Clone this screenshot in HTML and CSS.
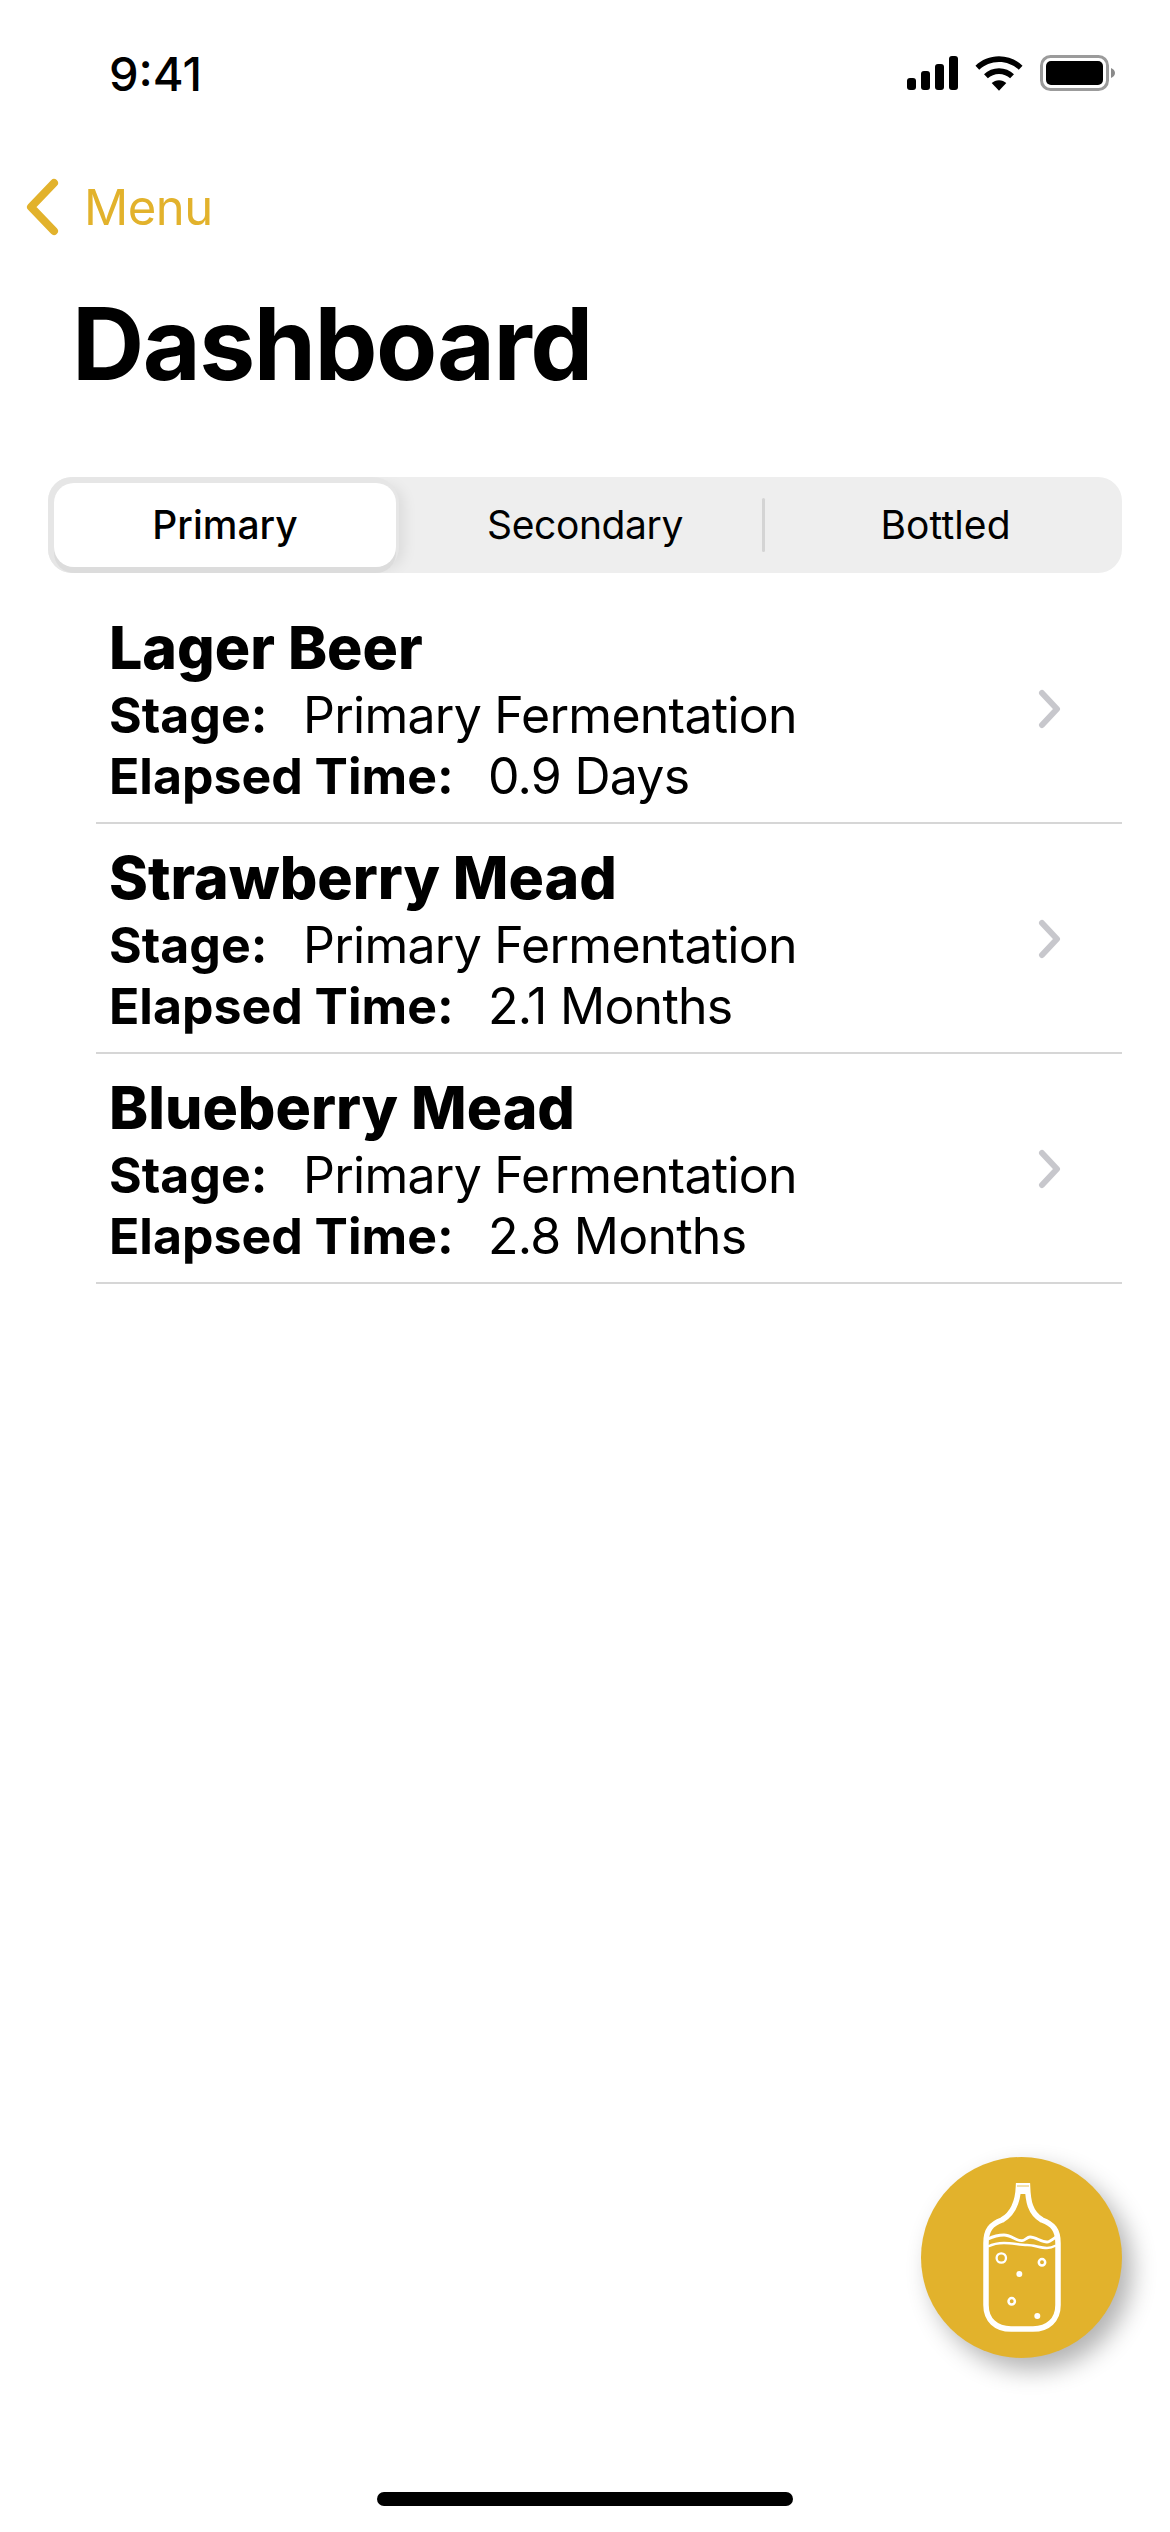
FILE: index.html
```html
<!DOCTYPE html>
<html lang="en">
<head>
    <meta charset="UTF-8">
    <meta name="viewport" content="width=device-width, initial-scale=1.0">
    <title>Dashboard</title>
    <link rel="stylesheet" href="styles.css">
</head>
<body>
    <div class="screen">
        <div class="status-bar">
            <div class="status-time">9:41</div>
            <div class="status-icons">
                <svg class="icon-signal" viewBox="0 0 51 34"><rect x="0" y="22" width="9" height="12" rx="3"/><rect x="14" y="15" width="9" height="19" rx="3"/><rect x="28" y="8" width="9" height="26" rx="3"/><rect x="42" y="0" width="9" height="34" rx="3"/></svg>
                <svg class="icon-wifi" viewBox="0 0 50 36"><path d="M25 0C34.500 0 43 3.700 49.500 9.800L45.600 14C40.200 9 33 5.900 25 5.900S9.800 9 4.400 14L.5 9.800C7 3.700 15.500 0 25 0Z"/><path d="M25 12.500C31 12.500 36.500 14.800 40.600 18.700L36.600 23C33.500 20.100 29.500 18.400 25 18.400S16.500 20.100 13.400 23L9.400 18.700C13.500 14.800 19 12.500 25 12.500Z"/><path d="M25 25C28 25 30.600 26.100 32.600 28L25 36L17.400 28C19.400 26.100 22 25 25 25Z"/></svg>
                <svg class="icon-battery" viewBox="0 0 75 36"><rect x="1.500" y="1.500" width="66" height="33" rx="9" fill="none" stroke="#9b9b9b" stroke-width="3"/><rect x="6" y="6" width="57" height="24" rx="5"/><path d="M71 13c2.500 1 4 2.800 4 5s-1.500 4-4 5z" fill="#8a8a8a"/></svg>
            </div>
        </div>

        <div class="nav-back">
            <svg class="icon-back" viewBox="0 0 33 58"><path d="M28 5L5 29l23 24" fill="none" stroke="#e2b22c" stroke-width="8" stroke-linecap="round" stroke-linejoin="round"/></svg>
            <span>Menu</span>
        </div>

        <h1 class="page-title">Dashboard</h1>

        <div class="segmented">
            <div class="segment"><div class="segment-active">Primary</div></div>
            <div class="segment segment-split">Secondary</div>
            <div class="segment segment-last">Bottled</div>
        </div>

        <div class="batch-list">
            <div class="batch-row">
                <div class="batch-info">
                    <div class="batch-name">Lager Beer</div>
                    <div class="batch-line"><b class="stage-label">Stage:</b><span class="batch-value">Primary Fermentation</span></div>
                    <div class="batch-line"><b class="time-label">Elapsed Time:</b><span class="batch-value">0.9 Days</span></div>
                </div>
                <svg class="icon-chevron" viewBox="0 0 24 40"><path d="M4 4l15 16L4 36" fill="none" stroke="#c7c7cc" stroke-width="6" stroke-linecap="round" stroke-linejoin="round"/></svg>
            </div>
            <div class="batch-row">
                <div class="batch-info">
                    <div class="batch-name">Strawberry Mead</div>
                    <div class="batch-line"><b class="stage-label">Stage:</b><span class="batch-value">Primary Fermentation</span></div>
                    <div class="batch-line"><b class="time-label">Elapsed Time:</b><span class="batch-value">2.1 Months</span></div>
                </div>
                <svg class="icon-chevron" viewBox="0 0 24 40"><path d="M4 4l15 16L4 36" fill="none" stroke="#c7c7cc" stroke-width="6" stroke-linecap="round" stroke-linejoin="round"/></svg>
            </div>
            <div class="batch-row">
                <div class="batch-info">
                    <div class="batch-name">Blueberry Mead</div>
                    <div class="batch-line"><b class="stage-label">Stage:</b><span class="batch-value">Primary Fermentation</span></div>
                    <div class="batch-line"><b class="time-label">Elapsed Time:</b><span class="batch-value">2.8 Months</span></div>
                </div>
                <svg class="icon-chevron" viewBox="0 0 24 40"><path d="M4 4l15 16L4 36" fill="none" stroke="#c7c7cc" stroke-width="6" stroke-linecap="round" stroke-linejoin="round"/></svg>
            </div>
        </div>

        <div class="home-indicator"></div>

        <div class="fab">
            <svg class="icon-carboy" viewBox="0 0 78 149" fill="none" stroke="#fff">
                <path d="M35.500 3H44.500C45 18 47 30 59 37C70 41 75 47 75 60V122C75 137 65 146 50 146H28C13 146 3 137 3 122V60C3 47 8 41 19 37C31 30 35 18 35.500 3Z" stroke-width="5.500"/>
                <rect x="33" y="0" width="14" height="11" fill="#fff" stroke="none"/>
                <path d="M34 3H46" stroke="#e2b22c" stroke-width="0.800"/>
                <path d="M5 56C11 53 16 52 21 52C28 52 33 58 39 57.700C42 57.500 44 54 47 54C53 54 58 59 64 59C67 59 70 56 73 54" stroke-width="2.800"/>
                <path d="M5 63.500C10 61 15 60 21 60C29 60 37 62 44 62C51 62 57 65 64 65C67 65 70 64 73 62.500" stroke-width="2.400"/>
                <circle cx="18.300" cy="75" r="4.700" stroke-width="2.300"/>
                <circle cx="59" cy="79.300" r="3.200" stroke-width="2.500"/>
                <circle cx="36.300" cy="91" r="3" fill="#fff" stroke="none"/>
                <circle cx="28.700" cy="118.300" r="3.200" stroke-width="2.500"/>
                <circle cx="54.300" cy="133" r="3" fill="#fff" stroke="none"/>
            </svg>
        </div>
    </div>
</body>
</html>
```

FILE: styles.css
```css
* {
    box-sizing: border-box;
}

body {
    margin: 0;
    background: #fff;
    color: #000;
    font-family: Inter, 'Liberation Sans', sans-serif;
}

.screen {
    position: relative;
    width: 1170px;
    height: 2532px;
    display: flex;
    flex-direction: column;
    overflow: hidden;
}

.status-bar {
    display: flex;
    justify-content: space-between;
    align-items: center;
    height: 74px;
    margin-top: 36px;
    padding: 0 55px 0 109px;
}

.status-time {
    font-size: 47px;
    font-weight: 500;
}

.status-icons {
    display: flex;
    align-items: center;
    gap: 17px;
}

.icon-signal {
    width: 51px;
    height: 34px;
}

.icon-wifi {
    width: 48px;
    height: 35px;
}

.icon-battery {
    width: 75px;
    height: 36px;
}

.nav-back {
    display: flex;
    align-items: center;
    gap: 25px;
    height: 62px;
    margin-top: 66px;
    padding-left: 26px;
    color: #e2b22c;
    font-size: 49px;
    letter-spacing: -0.5px;
}

.icon-back {
    width: 33px;
    height: 58px;
}

.page-title {
    margin: 46px 0 0 72px;
    font-size: 100px;
    font-weight: 700;
    line-height: 120px;
    letter-spacing: -1.5px;
}

.segmented {
    display: flex;
    height: 96px;
    margin: 73px 48px 0;
    padding: 6px;
    background: #eeeeee;
    border-radius: 24px;
    overflow: hidden;
}

.segment {
    position: relative;
    flex: 1;
    text-align: center;
    font-size: 39px;
    line-height: 84px;
}

.segment-split {
    letter-spacing: -0.4px;
}

.segment-split::after {
    content: '';
    position: absolute;
    right: -3px;
    top: 15px;
    width: 3px;
    height: 54px;
    background: #d4d4d4;
    border-radius: 2px;
}

.segment-last {
    text-indent: 13px;
    letter-spacing: 0.1px;
}

.segment-active {
    margin-right: 12px;
    background: #fff;
    border-radius: 20px;
    font-weight: 500;
    box-shadow: 0 6px 0 0 #dcdcdc, -3px 0 0 6px #e6e6e6, 8px 2px 14px rgba(0, 0, 0, 0.08);
}

.batch-list {
    margin: 21px 48px 0 96px;
}

.batch-row {
    display: flex;
    align-items: center;
    justify-content: space-between;
    height: 230px;
    padding: 1px 60px 0 13px;
    border-bottom: 2px solid #d6d6d6;
}

.batch-name {
    font-size: 59px;
    font-weight: 800;
    line-height: 74px;
}

.batch-line {
    font-size: 50px;
    line-height: 61px;
}

.batch-value {
    letter-spacing: -0.75px;
}

.stage-label {
    display: inline-block;
    width: 194px;
    font-weight: 700;
}

.time-label {
    display: inline-block;
    width: 379px;
    font-weight: 700;
}

.icon-chevron {
    width: 24px;
    height: 40px;
}

.home-indicator {
    width: 416px;
    height: 14px;
    margin: auto auto 26px;
    background: #000;
    border-radius: 7px;
}

.fab {
    position: absolute;
    left: 921px;
    top: 2157px;
    display: flex;
    align-items: center;
    justify-content: center;
    width: 201px;
    height: 201px;
    background: #e2b22c;
    border-radius: 50%;
    box-shadow: 10px 12px 24px rgba(0, 0, 0, 0.3);
}

.icon-carboy {
    width: 78px;
    height: 149px;
}
```
